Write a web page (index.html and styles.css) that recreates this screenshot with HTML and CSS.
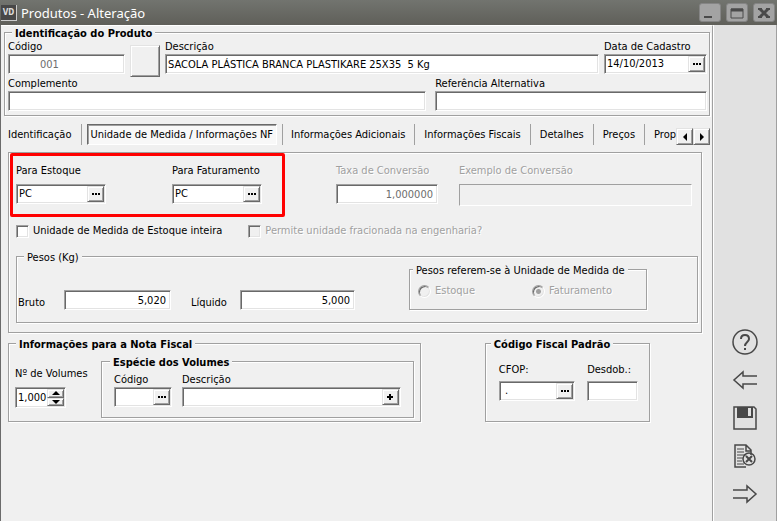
FILE: index.html
```html
<!DOCTYPE html>
<html lang="pt-BR">
<head>
    <meta charset="UTF-8">
    <meta name="viewport" content="width=device-width, initial-scale=1.0">
    <title>Produtos - Alteração</title>
    <link rel="stylesheet" href="styles.css">
</head>
<body>
    <!-- Title bar -->
    <header class="title-bar">
        <span class="app-icon">VD</span>
        <h1>Produtos - Alteração</h1>
        <div class="window-buttons">
            <button type="button" aria-label="Minimizar">
                <svg width="14" height="12" viewBox="0 0 14 12"><path d="M1 10h8" stroke="#4a4a4a" stroke-width="2"/></svg>
            </button>
            <button type="button" aria-label="Maximizar">
                <svg width="14" height="12" viewBox="0 0 14 12"><path d="M1 2h12v9H1z" fill="none" stroke="#4a4a4a"/><path d="M1 3h12" stroke="#4a4a4a" stroke-width="3"/></svg>
            </button>
            <button type="button" aria-label="Fechar">
                <svg width="14" height="12" viewBox="0 0 14 12"><path d="M1 2h4M9 2h4M1 10h4M9 10h4" stroke="#4a4a4a" stroke-width="2"/><path d="M3 2l8 8M11 2l-8 8" stroke="#4a4a4a" stroke-width="3"/></svg>
            </button>
        </div>
    </header>

    <div class="window-body">
        <main>
            <!-- Product identification -->
            <fieldset class="group product">
                <legend class="strong">Identificação do Produto</legend>
                <div class="product-row product-top">
                    <div class="field">
                        <label for="codigo">Código</label>
                        <input type="text" id="codigo" class="box code-input" value="001" disabled>
                    </div>
                    <button type="button" class="raised photo-button" aria-label="Foto"></button>
                    <div class="field">
                        <label for="descricao">Descrição</label>
                        <input type="text" id="descricao" class="box" value="SACOLA PLÁSTICA BRANCA PLASTIKARE 25X35  5 Kg">
                    </div>
                    <div class="field">
                        <label for="data">Data de Cadastro</label>
                        <div class="box combo">
                            <input type="text" id="data" value="14/10/2013">
                            <button type="button" class="raised" aria-label="Escolher data"><svg width="8" height="2"><path d="M0 1h2M3 1h2M6 1h2" stroke="#000" stroke-width="2"/></svg></button>
                        </div>
                    </div>
                </div>
                <div class="product-row product-bottom">
                    <div class="field">
                        <label for="complemento">Complemento</label>
                        <input type="text" id="complemento" class="box">
                    </div>
                    <div class="field">
                        <label for="referencia">Referência Alternativa</label>
                        <input type="text" id="referencia" class="box">
                    </div>
                </div>
            </fieldset>

            <!-- Tabs -->
            <nav class="tabs">
                <div class="tab-list">
                    <button type="button">Identificação</button>
                    <button type="button" class="active">Unidade de Medida / Informações NF</button>
                    <button type="button">Informações Adicionais</button>
                    <button type="button">Informações Fiscais</button>
                    <button type="button">Detalhes</button>
                    <button type="button">Preços</button>
                    <button type="button">Prop</button>
                </div>
                <div class="tab-scroll">
                    <button type="button" class="raised" aria-label="Abas anteriores"><svg width="4" height="8"><path d="M4 0v8L0 4z"/></svg></button>
                    <button type="button" class="raised" aria-label="Próximas abas"><svg width="4" height="8"><path d="M0 0v8l4-4z"/></svg></button>
                </div>
            </nav>

            <section class="group panel">
                <div class="units">
                    <div class="highlight">
                        <div class="field spaced">
                            <label for="estoque">Para Estoque</label>
                            <div class="box combo">
                                <input type="text" id="estoque" value="PC">
                                <button type="button" class="raised" aria-label="Buscar unidade"><svg width="8" height="2"><path d="M0 1h2M3 1h2M6 1h2" stroke="#000" stroke-width="2"/></svg></button>
                            </div>
                        </div>
                        <div class="field spaced">
                            <label for="faturamento">Para Faturamento</label>
                            <div class="box combo">
                                <input type="text" id="faturamento" value="PC">
                                <button type="button" class="raised" aria-label="Buscar unidade"><svg width="8" height="2"><path d="M0 1h2M3 1h2M6 1h2" stroke="#000" stroke-width="2"/></svg></button>
                            </div>
                        </div>
                    </div>
                    <div class="field spaced off rate">
                        <label for="taxa">Taxa de Conversão</label>
                        <input type="text" id="taxa" class="box number" value="1,000000" disabled>
                    </div>
                    <div class="field spaced off example">
                        <label for="exemplo">Exemplo de Conversão</label>
                        <input type="text" id="exemplo" class="flat-box" disabled>
                    </div>
                </div>

                <div class="checks">
                    <label><input type="checkbox"> Unidade de Medida de Estoque inteira</label>
                    <label class="off"><input type="checkbox" disabled> Permite unidade fracionada na engenharia?</label>
                </div>

                <fieldset class="group weights">
                    <legend>Pesos (Kg)</legend>
                    <div class="weights-row">
                        <label for="bruto" class="gross-label">Bruto</label>
                        <input type="text" id="bruto" class="box number gross" value="5,020">
                        <label for="liquido" class="net-label">Líquido</label>
                        <input type="text" id="liquido" class="box number net" value="5,000">
                        <fieldset class="group unit-choice">
                            <legend>Pesos referem-se à Unidade de Medida de</legend>
                            <div class="radios off">
                                <label><input type="radio" name="pesos" disabled> Estoque</label>
                                <label><input type="radio" name="pesos" checked disabled> Faturamento</label>
                            </div>
                        </fieldset>
                    </div>
                </fieldset>
            </section>

            <!-- Invoice and tax code -->
            <div class="bottom">
                <fieldset class="group invoice">
                    <legend class="strong">Informações para a Nota Fiscal</legend>
                    <div class="invoice-row">
                        <div class="field spaced volumes">
                            <label for="volumes">Nº de Volumes</label>
                            <div class="box combo spinner">
                                <input type="text" id="volumes" value="1,000">
                                <div class="spin-buttons">
                                    <button type="button" class="raised" aria-label="Aumentar"><svg width="8" height="4"><path d="M0 4h8L4 0z"/></svg></button>
                                    <button type="button" class="raised" aria-label="Diminuir"><svg width="8" height="4"><path d="M0 0h8L4 4z"/></svg></button>
                                </div>
                            </div>
                        </div>
                        <fieldset class="group species">
                            <legend class="strong">Espécie dos Volumes</legend>
                            <div class="species-row">
                                <div class="field species-code">
                                    <label for="especie">Código</label>
                                    <div class="box combo">
                                        <input type="text" id="especie">
                                        <button type="button" class="raised" aria-label="Buscar espécie"><svg width="8" height="2"><path d="M0 1h2M3 1h2M6 1h2" stroke="#000" stroke-width="2"/></svg></button>
                                    </div>
                                </div>
                                <div class="field species-name">
                                    <label for="especie-descricao">Descrição</label>
                                    <div class="box combo">
                                        <input type="text" id="especie-descricao">
                                        <button type="button" class="raised" aria-label="Adicionar espécie"><svg width="6" height="6"><path d="M0 3h6M3 0v6" stroke="#000" stroke-width="2"/></svg></button>
                                    </div>
                                </div>
                            </div>
                        </fieldset>
                    </div>
                </fieldset>

                <fieldset class="group fiscal">
                    <legend class="strong">Código Fiscal Padrão</legend>
                    <div class="fiscal-row">
                        <div class="field cfop">
                            <label for="cfop">CFOP:</label>
                            <div class="box combo">
                                <input type="text" id="cfop" value=" .">
                                <button type="button" class="raised" aria-label="Buscar CFOP"><svg width="8" height="2"><path d="M0 1h2M3 1h2M6 1h2" stroke="#000" stroke-width="2"/></svg></button>
                            </div>
                        </div>
                        <div class="field desdob">
                            <label for="desdob">Desdob.:</label>
                            <input type="text" id="desdob" class="box">
                        </div>
                    </div>
                </fieldset>
            </div>
        </main>

        <!-- Side toolbar -->
        <aside class="toolbar">
            <button type="button" aria-label="Ajuda">
                <svg width="26" height="26" viewBox="0 0 26 26"><circle cx="13" cy="13" r="12"/><path d="M9 10c0-3 2-4 4-4s4 1 4 4c0 3-4 3-4 7" stroke-width="2"/><path d="M13 19v2" stroke-width="2"/></svg>
            </button>
            <button type="button" aria-label="Voltar">
                <svg width="26" height="26" viewBox="0 0 26 26"><path d="M25 9H11V5l-9 8 9 8v-4h14"/></svg>
            </button>
            <button type="button" aria-label="Salvar">
                <svg width="26" height="26" viewBox="0 0 26 26"><path d="M2 2h20l2 2v20H2z"/><path d="M5 2h16v11H5z" fill="#484848" stroke="none"/><path d="M16 3h3v8h-3z" fill="#e1e1e1" stroke="none"/></svg>
            </button>
            <button type="button" aria-label="Cancelar">
                <svg width="26" height="26" viewBox="0 0 26 26"><path d="M14 24H3V2h11l5 5v5M14 2v6h5"/><path d="M5 6h7M5 9h7M5 12h9M5 15h6M5 18h5M5 21h7" stroke-width="1"/><circle cx="17" cy="16" r="6"/><path d="M14 13l6 6M20 13l-6 6" stroke-width="2"/></svg>
            </button>
            <button type="button" aria-label="Avançar">
                <svg width="26" height="26" viewBox="0 0 26 26"><path d="M1 9h14V5l9 8-9 8v-4H1"/></svg>
            </button>
        </aside>
    </div>
</body>
</html>
```
FILE: styles.css
```css
/* General Styles */
* {
    box-sizing: border-box;
}

body {
    margin: 0;
    min-height: 100vh;
    display: flex;
    flex-direction: column;
    background-color: #f0f0f0;
    color: #000;
    font-family: "DejaVu Sans Condensed", "Noto Sans", sans-serif;
    font-size: 11px;
    line-height: 14px;
}

input,
button {
    font: inherit;
    color: inherit;
    margin: 0;
    padding: 0;
    border: none;
    border-radius: 0;
    outline: none;
}

label {
    white-space: nowrap;
}

svg {
    display: block;
}

/* Title Bar */
.title-bar {
    display: flex;
    align-items: center;
    height: 25px;
    padding: 0 2px 0 1px;
    background: linear-gradient(#72746f, #5f5f59);
    color: #fff;
}

.title-bar h1 {
    flex: 1;
    margin: 0 0 0 4px;
    font-family: "Noto Sans", sans-serif;
    font-size: 13px;
    font-weight: normal;
}

.app-icon {
    width: 16px;
    height: 16px;
    border-right: 1px solid #ccc;
    border-bottom: 1px solid #ccc;
    background-color: #484848;
    color: #ddd;
    font-size: 8px;
    font-weight: bold;
    line-height: 15px;
    text-align: center;
}

.window-buttons {
    display: flex;
    gap: 5px;
}

.window-buttons button {
    display: flex;
    align-items: center;
    justify-content: center;
    width: 22px;
    height: 19px;
    border: 1px solid #858585;
    border-radius: 3px;
    background-color: #a3a3a3;
}

.window-body {
    flex: 1;
    display: flex;
    border-left: 1px solid #6b6b6b;
    border-right: 1px solid #a0a0a0;
}

main {
    flex: 1;
    min-width: 0;
    border-top: 1px solid #fff;
    border-right: 1px solid #a0a0a0;
}

/* Etched group boxes */
.group {
    margin: 0;
    padding: 0;
    min-width: 0;
    border: 1px solid #a0a0a0;
    box-shadow: 1px 1px 0 #fff, inset 1px 1px 0 #fff;
}

.group legend {
    margin-left: 6px;
    padding: 2px 3px 0;
    background-color: #f0f0f0;
    line-height: 11px;
}

.group legend.strong {
    font-weight: bold;
}

/* Sunken boxes */
.box {
    width: 100%;
    height: 20px;
    padding: 0 4px 0 2px;
    border: 1px solid;
    border-color: #a0a0a0 #fff #fff #a0a0a0;
    background-color: #fff;
    box-shadow: inset 1px 1px 0 #696969, inset -1px -1px 0 #e3e3e3;
}

.flat-box {
    width: 100%;
    height: 22px;
    border: 1px solid;
    border-color: #a0a0a0 #fff #fff #a0a0a0;
    background-color: transparent;
}

.box:disabled {
    color: #6d6d6d;
}

.number {
    text-align: right;
}

.raised {
    display: flex;
    align-items: center;
    justify-content: center;
    border: 1px solid;
    border-color: #e3e3e3 #696969 #696969 #e3e3e3;
    background-color: #f0f0f0;
    box-shadow: inset 1px 1px 0 #fff, inset -1px -1px 0 #a0a0a0;
}

.combo {
    display: flex;
    padding: 1px;
}

.combo input {
    flex: 1;
    min-width: 0;
    padding-left: 1px;
    background: none;
}

.combo .raised {
    width: 17px;
}

.field {
    display: flex;
    flex-direction: column;
    min-width: 0;
}

.spaced {
    gap: 6px;
}

.off {
    color: #a0a0a0;
    text-shadow: 1px 1px 0 #fff;
}

.off input {
    text-shadow: none;
}

/* Product */
.product {
    margin: 0 2px 0 3px;
    padding: 1px 2px 4px 3px;
}

.product legend {
    margin-left: 4px;
}

.product-row {
    display: grid;
}

.product-top {
    grid-template-columns: 117px 30px 1fr 103px;
    column-gap: 5px;
}

.product-bottom {
    grid-template-columns: 20fr 13fr;
    column-gap: 9px;
}

.code-input {
    padding-left: 31px;
}

.photo-button {
    height: 32px;
    margin-top: 5px;
}

/* Tabs */
.tabs {
    display: flex;
    margin: 8px 2px 7px 0;
}

.tab-list {
    flex: 1;
    display: flex;
    min-width: 0;
    overflow: hidden;
}

.tab-list button {
    flex-shrink: 0;
    height: 21px;
    padding: 0 9px;
    border-right: 1px solid #a0a0a0;
    background: none;
    white-space: nowrap;
}

.tab-list button:first-child {
    padding-left: 7px;
}

.tab-list button:last-child {
    padding-right: 0;
    border-right: none;
}

.tab-list .active {
    margin: 0 5px;
    padding: 0 3px;
    border: 1px solid;
    border-color: #696969 #fff #fff #696969;
    background-color: #f8f8f8;
    box-shadow: inset 1px 1px 0 #a0a0a0, 5px 0 0 #f0f0f0, 6px 0 0 #a0a0a0;
}

.tab-scroll {
    display: flex;
    align-items: flex-end;
}

.tab-scroll .raised {
    width: 17px;
    height: 17px;
}

/* Tab panel */
.panel {
    margin: 0 10px 0 7px;
}

.units {
    display: flex;
    align-items: flex-start;
}

.highlight {
    display: flex;
    gap: 66px;
    margin-left: 1px;
    padding: 8px 20px 10px 3px;
    border: 3px solid #f00;
    border-radius: 2px;
}

.highlight .field {
    width: 90px;
}

.rate {
    width: 102px;
    margin: 11px 21px 0 51px;
}

.example {
    flex: 1;
    margin: 11px 9px 0 0;
}

.checks {
    display: flex;
    gap: 26px;
    padding: 7px 7px 12px;
}

.checks label,
.radios label {
    display: flex;
    align-items: center;
    gap: 4px;
}

.checks input,
.radios input {
    appearance: none;
    width: 13px;
    height: 13px;
    border: 1px solid;
    border-color: #a0a0a0 #fff #fff #a0a0a0;
    background-color: #fff;
    box-shadow: inset 1px 1px 0 #696969, inset -1px -1px 0 #e3e3e3;
}

.checks input:disabled,
.radios input:disabled {
    background-color: #f0f0f0;
}

.radios input {
    border-radius: 50%;
}

.radios input:checked {
    background-image: radial-gradient(circle, #a0a0a0 2px, transparent 3px);
}

.weights {
    margin: 0 3px 9px 7px;
    padding: 0 0 12px 1px;
}

.weights-row {
    display: flex;
    align-items: flex-end;
}

.gross-label {
    width: 46px;
}

.net-label {
    width: 49px;
    margin-left: 20px;
}

.gross {
    width: 107px;
}

.net {
    width: 115px;
}

.unit-choice {
    width: 238px;
    margin-left: 54px;
}

.unit-choice legend {
    margin-left: 3px;
}

.radios {
    display: grid;
    grid-template-columns: 114px 1fr;
    padding: 8px 8px 11px;
}

/* Bottom groups */
.bottom {
    display: grid;
    grid-template-columns: 5fr 2fr;
    gap: 64px;
    margin: 4px 62px 0 7px;
}

.invoice {
    padding: 0 6px 3px;
}

.invoice legend {
    margin-left: 1px;
}

.invoice-row {
    display: flex;
    align-items: flex-start;
    gap: 11px;
    padding-top: 5px;
}

.volumes {
    width: 75px;
    padding-top: 12px;
}

.spinner {
    width: 51px;
    height: 21px;
}

.spin-buttons {
    display: flex;
    flex-direction: column;
}

.spin-buttons .raised {
    flex: 1;
    min-height: 0;
}

.species {
    flex: 1;
    padding: 5px 12px 10px;
}

.species legend {
    margin-left: -4px;
}

.species-row {
    display: flex;
    gap: 10px;
}

.species-code {
    width: 58px;
}

.species-name {
    flex: 1;
}

.fiscal {
    padding: 13px 11px 19px 13px;
}

.fiscal legend {
    margin-left: -8px;
}

.fiscal-row {
    display: flex;
    gap: 12px;
}

.fiscal .field {
    gap: 4px;
}

.cfop {
    flex: 3;
}

.desdob {
    flex: 2;
}

/* Side Toolbar */
.toolbar {
    display: flex;
    flex-direction: column;
    justify-content: flex-end;
    align-items: center;
    gap: 12px;
    width: 63px;
    padding-bottom: 14px;
    border-left: 1px solid #fff;
    background-color: #e1e1e1;
}

.toolbar button {
    background: none;
    cursor: pointer;
}

.toolbar svg {
    fill: none;
    stroke: #484848;
    stroke-width: 1.5;
}
```
